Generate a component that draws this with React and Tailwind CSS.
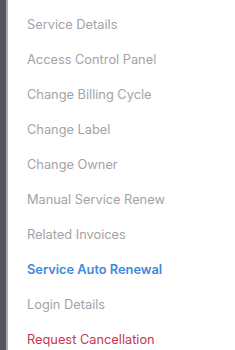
import React from 'react';

const items = [
    { label: 'Service Details' },
    { label: 'Access Control Panel' },
    { label: 'Change Billing Cycle' },
    { label: 'Change Label' },
    { label: 'Change Owner' },
    { label: 'Manual Service Renew' },
    { label: 'Related Invoices' },
    { label: 'Service Auto Renewal', active: true },
    { label: 'Login Details' },
    { label: 'Request Cancellation', danger: true },
];

const App = () => {
    return (
        <div className="flex h-[350px] w-[235px] bg-white overflow-hidden" style={{ fontFamily: 'Inter, "Noto Sans", sans-serif' }}>
            {/* dark edge of the neighbouring panel */}
            <div className="w-[6px] shrink-0 bg-[#55565c]" />
            <div className="w-[2px] shrink-0 bg-[#a9aab0]" />
            <ul className="flex flex-col pl-[19px] pt-[15px]">
                {items.map(item => (
                    <li
                        key={item.label}
                        className={
                            item.active
                                ? 'h-[35px] shrink-0 text-[12.8px] leading-[20px] font-semibold text-[#3f8ad8]'
                                : item.danger
                                    ? 'h-[35px] shrink-0 text-[12.8px] leading-[20px] text-[#c8374c]'
                                    : 'h-[35px] shrink-0 text-[12.8px] leading-[20px] text-[#a3a3a6]'
                        }
                    >
                        {item.label}
                    </li>
                ))}
            </ul>
        </div>
    );
};

export default App;
